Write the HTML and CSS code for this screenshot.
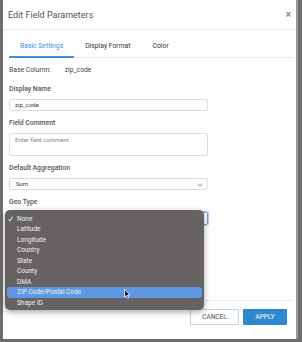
FILE: index.html
```html
<!DOCTYPE html>
<html lang="en">

<head>
    <meta charset="UTF-8">
    <meta name="viewport" content="width=device-width, initial-scale=1.0">
    <title>Edit Field Parameters</title>
    <link rel="stylesheet" href="styles.css">
</head>

<body>
    <div class="modal">
        <div class="modal-header">
            <h1>Edit Field Parameters</h1>
            <span class="close">&times;</span>
        </div>

        <div class="modal-body">
            <div class="tabs">
                <span class="tab active">Basic Settings</span>
                <span class="tab">Display Format</span>
                <span class="tab">Color</span>
            </div>

            <div class="base-col">
                <span class="base-label">Base Column:</span>
                <span>zip_code</span>
            </div>

            <div class="field first">
                <div class="label">Display Name</div>
                <div class="input">zip_code</div>
            </div>

            <div class="field">
                <div class="label">Field Comment</div>
                <div class="input textarea placeholder">Enter field comment</div>
            </div>

            <div class="field">
                <div class="label">Default Aggregation</div>
                <div class="input select">Sum
                    <svg class="chev" width="6" height="4" viewBox="0 0 6 4"><path d="M0.5 0.8 L3 3.2 L5.5 0.8" fill="none" stroke="#777" stroke-width="0.9"/></svg>
                </div>
            </div>

            <div class="field">
                <div class="label">Geo Type</div>
                <!-- value is covered by the open popup -->
                <div class="input select focus">
                    <svg class="chev" width="6" height="4" viewBox="0 0 6 4"><path d="M0.5 0.8 L3 3.2 L5.5 0.8" fill="none" stroke="#777" stroke-width="0.9"/></svg>
                </div>
            </div>
        </div>

        <div class="modal-footer">
            <button class="btn cancel">CANCEL</button>
            <button class="btn apply">APPLY</button>
        </div>

        <!-- native select popup -->
        <ul class="menu">
            <li><svg class="check" width="5" height="6" viewBox="0 0 5 6"><path d="M0.5 3.2 L1.9 5 L4.6 0.6" fill="none" stroke="#f2f2f2" stroke-width="1"/></svg>None</li>
            <li>Latitude</li>
            <li>Longitude</li>
            <li>Country</li>
            <li>State</li>
            <li>County</li>
            <li>DMA</li>
            <li class="hover">ZIP Code/Postal Code</li>
            <li>Shape ID</li>
        </ul>

        <svg class="cursor" width="7" height="10" viewBox="0 0 7 10">
            <path d="M0.5 0.5 L0.5 8 L2.3 6.4 L3.6 9.3 L4.8 8.8 L3.6 6 L6 6 Z" fill="#111" stroke="#fff" stroke-width="0.8"/>
        </svg>
    </div>
</body>

</html>
```

FILE: styles.css
```css
* {
    box-sizing: border-box;
}

body {
    margin: 0;
    background-color: #6d6d6d;
    font-family: Roboto, "Liberation Sans", sans-serif;
    color: #444;
    height: 342px;
    overflow: hidden;
}

.modal {
    position: relative;
    margin-left: 3px;
    width: 293px;
    height: 339px;
    background-color: #fff;
    display: flex;
    flex-direction: column;
    box-shadow: 2px 0 0 #9a9a9a;
}

.modal-header {
    height: 30px;
    border-bottom: 1px solid #ececec;
    display: flex;
    align-items: center;
    justify-content: space-between;
    padding: 0 5px 0 5px;
}

.modal-header h1 {
    margin: 0;
    font-size: 9px;
    font-weight: 400;
    color: #555;
}

.close {
    font-size: 10px;
    font-weight: 700;
    color: #888;
    line-height: 10px;
}

.modal-body {
    flex: 1;
    padding: 0 3px 0 6px;
}

.tabs {
    margin-top: 7px;
    display: flex;
    border-bottom: 1px solid #ececec;
}

.tab {
    padding: 4px 11px 5px;
    line-height: 10px;
    font-size: 6.8px;
    color: #333;
    border-bottom: 2px solid transparent;
    margin-bottom: -1px;
}

.tab.active {
    color: #3d8fe3;
    border-bottom-color: #3d8fe3;
}

.base-col {
    margin-top: 7px;
    line-height: 10px;
    font-size: 6.8px;
    color: #444;
}

.base-label {
    display: inline-block;
    width: 54px;
}

.field {
    margin-top: 7px;
}

.field.first {
    margin-top: 9px;
}

.label {
    line-height: 10px;
    font-size: 6.8px;
    font-weight: 500;
    color: #555;
    margin-bottom: 5px;
}

.input {
    position: relative;
    width: 199px;
    height: 12px;
    border: 1px solid #dcdcdc;
    border-radius: 2px;
    padding: 0 5px;
    font-size: 6px;
    line-height: 10px;
    color: #333;
}

.textarea {
    height: 23px;
    padding-top: 1px;
}

.placeholder {
    color: #888;
}

.select {
    padding-left: 6px;
}

.select.focus {
    height: 13px;
    border: 1px solid #6aa5ee;
    box-shadow: 0 0 0 1px #a8cbf5;
}

.chev {
    position: absolute;
    right: 4px;
    top: 4px;
}

.modal-footer {
    margin: 0 3px 0 7px;
    border-top: 1px solid #ececec;
    padding: 8px 6px 14px 0;
    display: flex;
    justify-content: flex-end;
    gap: 4px;
}

.btn {
    height: 16px;
    font-family: Roboto, "Liberation Sans", sans-serif;
    font-size: 6.5px;
    border-radius: 1px;
    padding: 0;
}

.cancel {
    width: 49px;
    background-color: #fff;
    border: 1px solid #b7d6ee;
    color: #555;
}

.apply {
    width: 44px;
    background-color: #2f88cf;
    border: 1px solid #2f88cf;
    color: #fff;
}

.menu {
    position: absolute;
    left: 2px;
    top: 210px;
    width: 199px;
    height: 100px;
    margin: 0;
    padding: 3.5px 2px;
    list-style: none;
    background-color: #666262;
    border-radius: 5px;
    box-shadow: 0 2px 6px rgba(0, 0, 0, 0.35);
}

.menu li {
    position: relative;
    height: 10.5px;
    line-height: 10.5px;
    padding-left: 10px;
    font-size: 6.5px;
    color: #f0f0f0;
    border-radius: 3px;
}

.menu li.hover {
    background-color: #5c98e4;
}

.check {
    position: absolute;
    left: 1px;
    top: 2.5px;
}

.cursor {
    position: absolute;
    left: 121px;
    top: 289px;
}
```
